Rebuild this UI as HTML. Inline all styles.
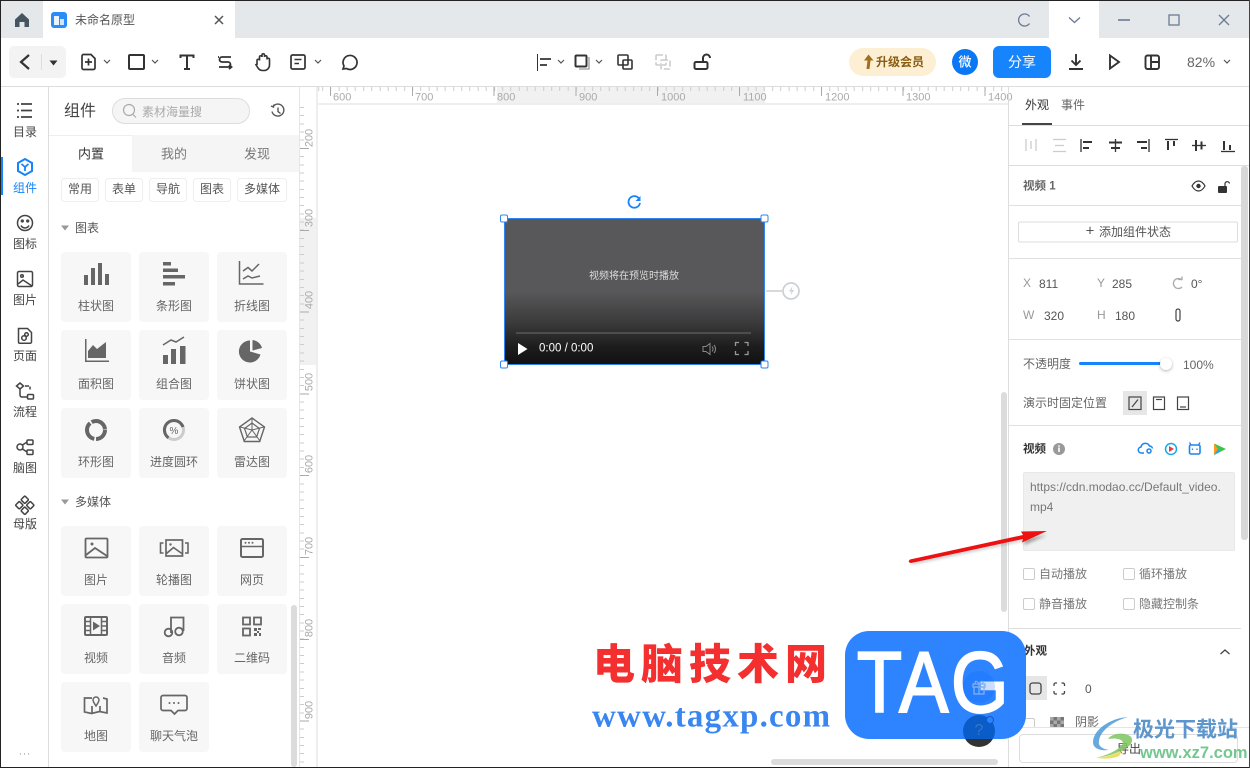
<!DOCTYPE html>
<html lang="zh"><head><meta charset="utf-8"><title>未命名原型</title>
<style>
*{box-sizing:border-box}
html,body{margin:0;padding:0;width:1250px;height:768px;overflow:hidden;background:#fff}
body{position:relative;font-family:"Liberation Sans","Noto Sans CJK SC",sans-serif;font-size:12px;color:#666}
.a{position:absolute}
.t{position:absolute;white-space:nowrap;transform:translateY(-50%);line-height:1}
.c{position:absolute;white-space:nowrap;transform:translate(-50%,-50%);line-height:1}
.card{position:absolute;width:70px;height:70px;background:#f7f7f7;border-radius:4px}
.chip{position:absolute;top:178px;height:24px;border:1px solid #eee;border-radius:4px;background:#fff;text-align:center;line-height:21px;color:#555;font-size:12px}
.ln{position:absolute;background:#e0e0e0;height:1px;left:1009px;width:232px}
.rx{position:absolute;top:98px;font-size:11px;line-height:1;color:#aaa;transform:translateY(-50%)}
.ry{position:absolute;left:310px;font-size:11px;line-height:1;color:#aaa;transform:translate(-50%,-50%) rotate(-90deg)}
.cb{position:absolute;width:12px;height:12px;border:1px solid #ccc;border-radius:2px;background:#fff}
</style></head><body>

<!-- title bar -->
<div class="a" style="left:0;top:0;width:1250px;height:38px;background:#e5e8eb"></div>
<div class="a" style="left:43px;top:1px;width:192px;height:37px;background:#fff"></div>
<div class="a" style="left:1049px;top:1px;width:50px;height:37px;background:#fff"></div>
<div class="t" style="left:75px;top:20px;font-size:12px;color:#555">未命名原型</div>

<!-- toolbar -->
<div class="a" style="left:0;top:86px;width:1250px;height:1px;background:#ddd"></div>
<div class="a" style="left:9px;top:46px;width:57px;height:32px;background:#f3f3f3;border-radius:5px"></div>
<div class="a" style="left:849px;top:48px;width:87px;height:28px;background:#fdefd3;border-radius:14px"></div>
<div class="t" style="left:876px;top:62px;font-size:12px;font-weight:700;color:#8a5d12">升级会员</div>
<div class="a" style="left:952px;top:49px;width:26px;height:26px;background:#0a78f5;border-radius:50%"></div>
<div class="c" style="left:965px;top:62px;font-size:13px;color:#fff;font-weight:500">微</div>
<div class="a" style="left:993px;top:46px;width:58px;height:32px;background:#1684fc;border-radius:6px"></div>
<div class="c" style="left:1022px;top:62px;font-size:14px;color:#fff">分享</div>
<div class="t" style="left:1187px;top:62px;font-size:14px;color:#666">82%</div>

<!-- left rail -->
<div class="a" style="left:48px;top:87px;width:1px;height:681px;background:#ddd"></div>
<div class="a" style="left:1px;top:157px;width:2px;height:38px;background:#1684fc"></div>
<div class="c" style="left:25px;top:132px;color:#444">目录</div>
<div class="c" style="left:25px;top:188px;color:#1684fc">组件</div>
<div class="c" style="left:25px;top:244px;color:#444">图标</div>
<div class="c" style="left:25px;top:300px;color:#444">图片</div>
<div class="c" style="left:25px;top:356px;color:#444">页面</div>
<div class="c" style="left:25px;top:412px;color:#444">流程</div>
<div class="c" style="left:25px;top:468px;color:#444">脑图</div>
<div class="c" style="left:25px;top:524px;color:#444">母版</div>
<div class="c" style="left:25px;top:752px;color:#999;font-size:11px;letter-spacing:1px">...</div>

<!-- sidebar -->
<div class="a" style="left:299px;top:87px;width:1px;height:681px;background:#e6e6e6"></div>
<div class="t" style="left:64px;top:112px;font-size:16px;color:#444">组件</div>
<div class="a" style="left:112px;top:98px;width:138px;height:26px;background:#f5f5f5;border:1px solid #ddd;border-radius:13px"></div>
<div class="t" style="left:142px;top:112px;font-size:12px;color:#aaa">素材海量搜</div>
<div class="a" style="left:49px;top:135px;width:250px;height:1px;background:#eee"></div>
<div class="a" style="left:132px;top:135px;width:167px;height:37px;background:#f5f5f5"></div>
<div class="c" style="left:91px;top:154px;font-size:13px;color:#333">内置</div>
<div class="c" style="left:174px;top:154px;font-size:13px;color:#777">我的</div>
<div class="c" style="left:257px;top:154px;font-size:13px;color:#777">发现</div>
<div class="chip" style="left:61px;width:38px">常用</div>
<div class="chip" style="left:105px;width:38px">表单</div>
<div class="chip" style="left:149px;width:38px">导航</div>
<div class="chip" style="left:193px;width:38px">图表</div>
<div class="chip" style="left:237px;width:50px">多媒体</div>
<div class="t" style="left:75px;top:228px;color:#555">图表</div>
<div class="t" style="left:75px;top:502px;color:#555">多媒体</div>

<div class="card" style="left:61px;top:252px"></div><div class="card" style="left:139px;top:252px"></div><div class="card" style="left:217px;top:252px"></div>
<div class="card" style="left:61px;top:330px"></div><div class="card" style="left:139px;top:330px"></div><div class="card" style="left:217px;top:330px"></div>
<div class="card" style="left:61px;top:408px"></div><div class="card" style="left:139px;top:408px"></div><div class="card" style="left:217px;top:408px"></div>
<div class="card" style="left:61px;top:526px"></div><div class="card" style="left:139px;top:526px"></div><div class="card" style="left:217px;top:526px"></div>
<div class="card" style="left:61px;top:604px"></div><div class="card" style="left:139px;top:604px"></div><div class="card" style="left:217px;top:604px"></div>
<div class="card" style="left:61px;top:682px"></div><div class="card" style="left:139px;top:682px"></div>

<div class="c" style="left:96px;top:306px">柱状图</div><div class="c" style="left:174px;top:306px">条形图</div><div class="c" style="left:252px;top:306px">折线图</div>
<div class="c" style="left:96px;top:384px">面积图</div><div class="c" style="left:174px;top:384px">组合图</div><div class="c" style="left:252px;top:384px">饼状图</div>
<div class="c" style="left:96px;top:462px">环形图</div><div class="c" style="left:174px;top:462px">进度圆环</div><div class="c" style="left:252px;top:462px">雷达图</div>
<div class="c" style="left:96px;top:580px">图片</div><div class="c" style="left:174px;top:580px">轮播图</div><div class="c" style="left:252px;top:580px">网页</div>
<div class="c" style="left:96px;top:658px">视频</div><div class="c" style="left:174px;top:658px">音频</div><div class="c" style="left:252px;top:658px">二维码</div>
<div class="c" style="left:96px;top:736px">地图</div><div class="c" style="left:174px;top:736px">聊天气泡</div>
<div class="a" style="left:291px;top:605px;width:6px;height:162px;background:#dcdcdc;border-radius:3px"></div>

<!-- rulers -->
<div class="a" style="left:497px;top:87px;width:268px;height:16px;background:#f1f1f1"></div>
<div class="a" style="left:300px;top:218px;width:16px;height:147px;background:#f1f1f1"></div>
<div class="a" style="left:317px;top:87px;width:691px;height:4px;background:repeating-linear-gradient(90deg,#ccc 0,#ccc 1px,transparent 1px,transparent 8.18px);background-position:5.2px 0"></div>
<div class="a" style="left:330px;top:87px;width:678px;height:9px;background:repeating-linear-gradient(90deg,#aaa 0,#aaa 1px,transparent 1px,transparent 81.8px)"></div>
<div class="a" style="left:316px;top:103px;width:692px;height:2px;background:#eee"></div>
<div class="a" style="left:316px;top:87px;width:2px;height:681px;background:#eee"></div>
<div class="a" style="left:300px;top:107px;width:4px;height:661px;background:repeating-linear-gradient(180deg,#ccc 0,#ccc 1px,transparent 1px,transparent 8.18px)"></div>
<div class="a" style="left:300px;top:148px;width:9px;height:620px;background:repeating-linear-gradient(180deg,#aaa 0,#aaa 1px,transparent 1px,transparent 81.8px)"></div>
<span class="rx" style="left:333px">600</span><span class="rx" style="left:415px">700</span><span class="rx" style="left:497px">800</span><span class="rx" style="left:579px">900</span><span class="rx" style="left:661px">1000</span><span class="rx" style="left:743px">1100</span><span class="rx" style="left:825px">1200</span><span class="rx" style="left:906px">1300</span><span class="rx" style="left:988px">1400</span>
<span class="ry" style="top:138px">200</span><span class="ry" style="top:218px">300</span><span class="ry" style="top:300px">400</span><span class="ry" style="top:382px">500</span><span class="ry" style="top:464px">600</span><span class="ry" style="top:546px">700</span><span class="ry" style="top:628px">800</span><span class="ry" style="top:710px">900</span>

<!-- video -->
<div class="a" style="left:504px;top:218px;width:261px;height:147px;border:1.500px solid #2f86f0;background:linear-gradient(180deg,#58585a 0,#58585a 50%,#3a3a3b 72%,#1d1d1d 88%,#111 100%)"></div>
<div class="c" style="left:634px;top:277px;font-size:10px;color:#ddd">视频将在预览时播放</div>
<div class="a" style="left:516px;top:332px;width:235px;height:2px;background:#4d4d4d"></div>
<div class="t" style="left:539px;top:349px;font-size:11.500px;color:#fff">0:00 / 0:00</div>
<div class="a" style="left:1001px;top:392px;width:6px;height:220px;background:#dcdcdc;border-radius:3px"></div>
<div class="a" style="left:771px;top:759px;width:227px;height:6px;background:#dcdcdc;border-radius:3px"></div>

<!-- right panel -->
<div class="a" style="left:1008px;top:87px;width:1px;height:681px;background:#ddd"></div>
<div class="c" style="left:1037px;top:105px;color:#333;font-size:12px">外观</div>
<div class="c" style="left:1073px;top:105px;color:#666;font-size:12px">事件</div>
<div class="a" style="left:1009px;top:125px;width:241px;height:1px;background:#ddd"></div>
<div class="a" style="left:1022px;top:123px;width:30px;height:2px;background:#444"></div>
<div class="a" style="left:1009px;top:165px;width:241px;height:1px;background:#ddd"></div>
<div class="a" style="left:1241px;top:166px;width:7px;height:374px;background:#d8d8d8;border-radius:3px"></div>
<div class="t" style="left:1023px;top:187px;color:#666;font-weight:700;font-size:11.500px">视频 1</div>
<div class="ln" style="top:205px"></div>
<div class="c" style="left:1128px;top:232px;width:220px;height:21px;border:1px solid #ddd;border-radius:2px;background:#fff"></div>
<div class="c" style="left:1090px;top:231px;color:#555;font-size:15px">+</div>
<div class="t" style="left:1099px;top:232px;color:#555">添加组件状态</div>
<div class="ln" style="top:258px"></div>
<div class="t" style="left:1023px;top:283px;color:#999">X</div><div class="t" style="left:1039px;top:284px;color:#555">811</div>
<div class="t" style="left:1097px;top:283px;color:#999">Y</div><div class="t" style="left:1112px;top:284px;color:#555">285</div>
<div class="t" style="left:1191px;top:284px;color:#555">0°</div>
<div class="t" style="left:1023px;top:315px;color:#999">W</div><div class="t" style="left:1044px;top:316px;color:#555">320</div>
<div class="t" style="left:1097px;top:315px;color:#999">H</div><div class="t" style="left:1115px;top:316px;color:#555">180</div>
<div class="ln" style="top:339px"></div>
<div class="t" style="left:1023px;top:364px;color:#666">不透明度</div>
<div class="a" style="left:1079px;top:362px;width:83px;height:3px;background:#1684fc;border-radius:2px"></div>
<div class="a" style="left:1160px;top:358px;width:12px;height:12px;border-radius:50%;background:#fff;box-shadow:0 1px 3px rgba(0,0,0,.3)"></div>
<div class="t" style="left:1183px;top:365px;color:#666">100%</div>
<div class="t" style="left:1023px;top:403px;color:#666">演示时固定位置</div>
<div class="a" style="left:1123px;top:391px;width:24px;height:24px;background:#e6e6e6"></div>
<div class="ln" style="top:425px"></div>
<div class="t" style="left:1023px;top:450px;color:#333;font-weight:700;font-size:11.500px">视频</div>
<div class="a" style="left:1023px;top:472px;width:212px;height:79px;background:#f0f0f0;border:1px solid #e8e8e8;border-radius:2px"></div>
<div class="t" style="left:1030px;top:487px;color:#777">https://cdn.modao.cc/Default_video.</div>
<div class="t" style="left:1030px;top:507px;color:#777">mp4</div>
<div class="cb" style="left:1023px;top:568px"></div><div class="t" style="left:1039px;top:574px;color:#777">自动播放</div>
<div class="cb" style="left:1123px;top:568px"></div><div class="t" style="left:1139px;top:574px;color:#777">循环播放</div>
<div class="cb" style="left:1023px;top:598px"></div><div class="t" style="left:1039px;top:604px;color:#777">静音播放</div>
<div class="cb" style="left:1123px;top:598px"></div><div class="t" style="left:1139px;top:604px;color:#777">隐藏控制条</div>
<div class="a" style="left:1009px;top:628px;width:232px;height:1px;background:#ddd"></div>
<div class="t" style="left:1024px;top:652px;color:#333;font-weight:700;font-size:11.500px">外观</div>
<div class="a" style="left:1024px;top:676px;width:23px;height:24px;background:#e6e6e6"></div>
<div class="t" style="left:1085px;top:689px;color:#555">0</div>
<div class="a" style="left:1022px;top:718px;width:13px;height:10px;border:1px solid #ccc;border-bottom:0;border-radius:2px 2px 0 0"></div>
<div class="a" style="left:1050px;top:717px;width:14px;height:10px;background:repeating-conic-gradient(#777 0 25%,#aaa 0 50%) 0 0/7px 7px"></div>
<div class="t" style="left:1075px;top:722px;color:#666">阴影</div>
<div class="a" style="left:1009px;top:727px;width:241px;height:1px;background:#e4e4e4"></div>
<div class="a" style="left:1019px;top:734px;width:219px;height:29px;border:1px solid #ddd;border-radius:4px;background:#fff"></div>

<!-- icons layer -->
<svg class="a" style="left:0;top:0" width="1250" height="768" viewBox="0 0 1250 768">
<!-- title bar -->
<path d="M15 27V19.500L22 13l7 6.500V27h-4.500v-5h-5v5z" fill="#46555f"/>
<rect x="51" y="12" width="16" height="16" rx="3" fill="#2a8cf7"/><rect x="54" y="16" width="5" height="9" fill="#fff" opacity=".9"/><rect x="60" y="19" width="4" height="6" fill="#cfe4ff"/>
<g fill="none" stroke="#555" stroke-width="1.500"><path d="M215 16l8 8M223 16l-8 8"/></g>
<g fill="none" stroke="#6b7a95" stroke-width="1.300">
<path d="M1029.500 16.500a6 6 0 1 0 0 7"/><path d="M1069 17.500l5.500 5 5.500-5"/><path d="M1118 20h12" stroke-width="1.600"/><rect x="1169" y="15" width="10" height="10"/><path d="M1219 15l10 10M1229 15l-10 10"/></g>
<!-- toolbar left -->
<g fill="none" stroke="#333" stroke-width="2">
<path d="M29 55l-8 7 8 7" stroke-width="2.200"/>
<path d="M82 56a1.500 1.500 0 0 1 1.500-1.500H91l4 4V68a1.500 1.500 0 0 1-1.500 1.500h-10A1.500 1.500 0 0 1 82 68zM85 62h7M88.500 58.500v7" stroke-width="1.700"/>
<rect x="129" y="55" width="15" height="14" rx="1"/>
<path d="M180.500 58v-2.500h13V58M187 55.500V69M184 69h6" stroke-width="2"/>
<path d="M231 57h-9a2.500 2.500 0 0 0 0 5h6a2.500 2.500 0 0 1 0 5h-9M218 57h1M229 65l2.500 2-2.500 2" stroke-width="1.800"/>
<path d="M257 65v-4.500a1.200 1.200 0 0 1 2.500 0V57a1.200 1.200 0 0 1 2.500 0v-2a1.200 1.200 0 0 1 2.500 0v2a1.200 1.200 0 0 1 2.500 0v2.500a1.200 1.200 0 0 1 2.500 0V65a5.500 5.500 0 0 1-5.500 5.500h-1.500c-2 0-3.500-1-4.500-2.500l-2.500-4" stroke-width="1.600"/>
<rect x="291" y="55" width="14" height="14" rx="1.500" stroke-width="1.700"/><path d="M294.500 59.500h7M294.500 63.500h4.500" stroke-width="1.500"/>
<path d="M343 69l1-3a7 7 0 1 1 2.500 2.500z" stroke-width="1.700"/>
</g>
<path d="M49.500 60.500h8l-4 5z" fill="#333"/><rect x="41" y="54" width="1" height="16" fill="#ddd"/>
<g fill="none" stroke="#555" stroke-width="1.200"><path d="M104 60l3 3 3-3M152 60l3 3 3-3M315 60l3 3 3-3M558 60l3 3 3-3M596 60l3 3 3-3M1224 60l3 3 3-3"/></g>
<!-- toolbar center -->
<g fill="none" stroke="#333" stroke-width="1.800">
<path d="M537.500 54v17" stroke-width="1"/><path d="M540 59h11M540 65h7"/>
<rect x="575.500" y="55.500" width="11" height="11" rx="1" stroke-width="2"/><path d="M589 57v12h-10" stroke="#999" stroke-width="1.300"/>
<rect x="618" y="55" width="10" height="10" rx="1" stroke-width="1.600"/><rect x="623" y="60" width="9" height="9" rx="1" stroke-width="1.600"/>
<path d="M696 62h10a1.500 1.500 0 0 1 1.500 1.500v4a1.500 1.500 0 0 1-1.500 1.500h-10a1.500 1.500 0 0 1-1.500-1.500v-4a1.500 1.500 0 0 1 1.500-1.500zM703 61v-3a3.500 3.500 0 0 1 7 0" stroke-width="2"/>
</g>
<g fill="none" stroke="#ccc" stroke-width="1.600"><rect x="656" y="55" width="10" height="10" rx="1" stroke-dasharray="6 2"/><rect x="661" y="60" width="9" height="9" rx="1" stroke-dasharray="6 2"/></g>
<!-- upgrade + right -->
<path d="M868.500 54.500l5 6h-3l-1 8.500h-3l1-8.500h-3.500z" fill="#a36f1c"/>
<g fill="none" stroke="#333" stroke-width="1.900">
<path d="M1076 54v11M1071.500 60.500l4.500 4.500 4.500-4.500M1069 69h14"/>
<path d="M1110 55.500l9 6.500-9 6.500z"/>
<rect x="1145.500" y="55.500" width="13.500" height="13.500" rx="2"/><path d="M1151 55.500v13.500M1151 62h8"/>
</g>
<!-- rail icons -->
<g fill="none" stroke="#444" stroke-width="1.500">
<path d="M21 104h11M21 110.500h11M21 117h11M17 104h2M17 110.500h2M17 117h2" stroke-width="1.700"/>
<circle cx="25" cy="223" r="7.500"/><circle cx="22.300" cy="221" r=".9" fill="#444"/><circle cx="27.700" cy="221" r=".9" fill="#444"/><path d="M21 225.500a4.500 4.500 0 0 0 8 0"/>
<rect x="17.500" y="271.500" width="15" height="15" rx="1.500"/><circle cx="22" cy="276" r="1.300"/><path d="M18 284l5-4 3 2 6 4"/>
<path d="M18.500 328.500h9l4 4v9.500a1.200 1.200 0 0 1-1.200 1.200H19.700a1.200 1.200 0 0 1-1.200-1.200z"/><circle cx="24" cy="338" r="2.300"/><circle cx="26.500" cy="334.500" r="1.800"/>
<path d="M20 383l-3.500 3 3.500 3 3.500-3zM25 386h4M30 386.500v3M20 389v6a2 2 0 0 0 2 2h5"/><rect x="27.500" y="394.500" width="6" height="4.500" rx="1"/>
<circle cx="20" cy="447" r="3"/><rect x="27" y="440" width="6" height="4.500" rx="1"/><rect x="27" y="450" width="6" height="4.500" rx="1"/><path d="M22.500 445l4.500-3M22.500 449l4.500 3"/>
<rect x="22" y="497" width="5.500" height="5.500" rx="1" transform="rotate(45 24.800 499.800)"/><rect x="22" y="508" width="5.500" height="5.500" rx="1" transform="rotate(45 24.800 510.800)"/><rect x="16.500" y="502.500" width="5.500" height="5.500" rx="1" transform="rotate(45 19.300 505.300)"/><rect x="27.500" y="502.500" width="5.500" height="5.500" rx="1" transform="rotate(45 30.300 505.300)"/>
</g>
<path d="M25 159l7 4v8l-7 4-7-4v-8z" fill="none" stroke="#1684fc" stroke-width="2"/><path d="M21.500 164l3.500 3 3.500-3M25 167v4" fill="none" stroke="#1684fc" stroke-width="1.800"/>
<!-- search + clock -->
<g fill="none" stroke="#aaa" stroke-width="1.200"><circle cx="129" cy="110" r="5.500"/><path d="M133 114.500l3 3"/></g>
<g fill="none" stroke="#555" stroke-width="1.400"><path d="M273 106.500a6 6 0 1 1-1 5"/><path d="M278 107.500v4l2.500 2"/><path d="M271 106l2.500 1 .5-2.500"/></g>
<path d="M61 225.500h8l-4 5zM61 499.500h8l-4 5z" fill="#999"/>
<!-- chart icons -->
<g fill="#666">
<rect x="84" y="275" width="4" height="10"/><rect x="91" y="268" width="4" height="17"/><rect x="98" y="263" width="4" height="22"/><rect x="105" y="274" width="4" height="11"/>
<rect x="163" y="262" width="8" height="3.500"/><rect x="163" y="268.500" width="15" height="3.500"/><rect x="163" y="275" width="22" height="3.500"/><rect x="163" y="282" width="12" height="3.500"/>
<path d="M85 339h1.500v21.500H109v1.500H85z"/><path d="M88 358v-7l5-6 4 4 9-7v16z"/>
<rect x="163" y="355" width="5" height="9"/><rect x="171" y="349" width="5" height="15"/><rect x="180" y="346" width="5.500" height="18"/>
<path d="M250 340.500v11l10.500 3a11 11 0 1 1-10.500-14zM252.500 340a11 11 0 0 1 9.500 8l-9.500 2.500z"/>
</g>
<g fill="none" stroke="#666" stroke-width="1.500">
<path d="M239.500 261v23h24M243 271l5-3.500 4 3.500 7-7M243 279l5-3 4 2 8-2"/>
<path d="M163 345l8-5 5 2 8-5"/>
<circle cx="96" cy="430" r="9" stroke-width="4" stroke-dasharray="14 1.800 20 1.800 18 1.800"/>
<circle cx="174" cy="430" r="9.500" stroke="#ccc" stroke-width="3"/><path d="M174 420.500a9.500 9.500 0 0 0-5.500 17.300" stroke-width="3"/><path d="M174 420.500a9.500 9.500 0 0 1 9 6.500" stroke-width="3"/>
<path d="M252 418l12.500 9-4.800 14.500h-15.400l-4.800-14.500z" stroke-width="1.400"/><path d="M252 423l7.500 5.500-2.900 8.500h-9.200l-2.900-8.500z" stroke-width="1.200"/><path d="M252 418v12M264 427l-12 3M260 441l-8-11M244 441l8-11M240 427l12 3" stroke-width="1"/>
<rect x="85.500" y="538.500" width="22" height="19" rx="1" stroke-width="1.800"/><circle cx="92" cy="544" r="1.500" fill="#666" stroke="none"/><path d="M86 555l9-7 12 8" stroke-width="1.800"/>
<rect x="166" y="540" width="16.500" height="16" stroke-width="1.700"/><circle cx="170.500" cy="544.500" r="1.200" fill="#666" stroke="none"/><path d="M166.500 553.500l7-6 9 6.500M163.500 543h-3v10h3M185 543h3v10h-3" stroke-width="1.600"/>
<rect x="241" y="539" width="22" height="18" rx="1.500" stroke-width="2"/><path d="M241 546.500h22" stroke-width="1.600"/>
<rect x="85" y="617" width="22" height="18" rx="1" stroke-width="2"/><path d="M90.500 617v18M101.500 617v18M85 621.500h5.500M85 626h5.500M85 630.500h5.500M101.500 621.500h5.500M101.500 626h5.500M101.500 630.500h5.500" stroke-width="1.500"/>
<path d="M171 633v-15.500h12.500V631" stroke-width="1.800"/><circle cx="168.500" cy="632.500" r="3.800" stroke-width="1.800"/><circle cx="179" cy="631.500" r="3.800" stroke-width="1.800"/>
<rect x="243" y="617.500" width="7" height="7" stroke-width="1.800"/><rect x="254" y="617.500" width="7" height="7" stroke-width="1.800"/><rect x="243" y="628.500" width="7" height="7" stroke-width="1.800"/>
<path d="M92 698h-7.500v14l7 1.500 8-2 7.500 1.500v-14l-4-1M92 706v7M100 706v6" stroke-width="1.700"/><path d="M96 706c-2-3-3-4.500-3-6a3 3 0 0 1 6 0c0 1.500-1 3-3 6z" stroke-width="1.500"/>
<path d="M163 695.500h22a2 2 0 0 1 2 2v11a2 2 0 0 1-2 2h-7l-3.500 3.500-3.500-3.500h-8a2 2 0 0 1-2-2v-11a2 2 0 0 1 2-2z" stroke-width="1.700"/>
</g>
<path d="M93 621.500l7 4.500-7 4.500z" fill="#666"/>
<path d="M254 628h3v3h-3zM258 628h3v2h-3zM257 631h2v2h-2zM254 633h3v3h-3zM259 633h2v3h-2z" fill="#666"/>
<g fill="#666"><circle cx="245.500" cy="542.700" r="1"/><circle cx="249" cy="542.700" r="1"/><circle cx="252.500" cy="542.700" r="1"/><circle cx="169.500" cy="703" r="1"/><circle cx="174" cy="703" r="1"/><circle cx="178.500" cy="703" r="1"/></g>
<text x="174" y="434" font-size="10" fill="#666" text-anchor="middle" font-family="Liberation Sans">%</text>
<!-- video overlays -->
<g fill="none" stroke="#1684fc" stroke-width="1.800"><path d="M639 198.500a5.800 5.800 0 1 0 1 4.500"/></g><path d="M640.500 196v5h-5z" fill="#1684fc"/>
<g fill="#fff" stroke="#2f86f0" stroke-width="1"><rect x="500.500" y="215" width="7" height="7" rx="1.500"/><rect x="761" y="215" width="7" height="7" rx="1.500"/><rect x="500.500" y="361" width="7" height="7" rx="1.500"/><rect x="761" y="361" width="7" height="7" rx="1.500"/></g>
<path d="M518 343l9.500 6-9.500 6z" fill="#fff"/>
<g fill="none" stroke="#888" stroke-width="1"><path d="M703 346.500h3l4-3v11l-4-3h-3zM712 346.500a3.500 3.500 0 0 1 0 5M714 345a6 6 0 0 1 0 8"/></g>
<g fill="none" stroke="#999" stroke-width="1.300"><path d="M735.500 346v-3.500h3.500M744.500 342.500h3.500v3.500M748 351v3.500h-3.500M739 354.500h-3.500V351"/></g>
<path d="M766 291h16" stroke="#ccc" stroke-width="1.500"/><circle cx="791" cy="291" r="8" fill="#fff" stroke="#ccd0d4" stroke-width="1.700"/><path d="M792.500 286l-3.500 5.500h2.500l-1 4 3.500-5.500h-2.500z" fill="#ccd0d4"/>
<!-- right panel align -->
<g fill="none" stroke="#ccc" stroke-width="1.300"><path d="M1026 139v12M1036 139v12M1031 141v8"/><path d="M1053 139.500h13M1053 151.500h13M1055 145.500h9"/></g>
<g fill="none" stroke="#333" stroke-width="1.300">
<path d="M1081 139v13"/><path d="M1083 142h9M1083 148h6" stroke-width="2"/>
<path d="M1115.500 139v13"/><path d="M1109 142.500h13M1111 148h9" stroke-width="2"/>
<path d="M1149 139v13"/><path d="M1137 142h10M1141 148h6" stroke-width="2"/>
<path d="M1165 139.500h13"/><path d="M1168 141v9M1174 141v5" stroke-width="2"/>
<path d="M1192 145.500h14"/><path d="M1196 140v11M1201.500 141.500v8" stroke-width="2"/>
<path d="M1221 151.500h14"/><path d="M1224 141v9M1230 145v5" stroke-width="2"/>
<path d="M1192 186c2-3.500 4-5 6.500-5s4.500 1.500 6.500 5c-2 3.500-4 5-6.500 5s-4.500-1.500-6.500-5z" stroke-width="1.200"/></g>
<circle cx="1198.500" cy="186" r="2.200" fill="#333"/>
<rect x="1218" y="186" width="9" height="7" rx="1" fill="#333"/><path d="M1225 186v-2.500a2.300 2.300 0 0 1 4.500 0" fill="none" stroke="#333" stroke-width="1.200"/>
<g fill="none" stroke="#aaa" stroke-width="1.300"><path d="M1182 280a5 5 0 1 0 0 7"/><path d="M1178 279.500h4v-3"/></g>
<g fill="none" stroke="#444" stroke-width="1.200"><path d="M1176 312v-1a2 2 0 0 1 4 0v1M1176 318v1a2 2 0 0 0 4 0v-1M1176 312v6M1180 312v6"/>
<rect x="1129" y="397" width="12" height="12.500"/><path d="M1132 407l6-7.500"/>
<rect x="1153.500" y="397" width="11" height="12.500"/><path d="M1156 399.500h6"/>
<rect x="1177.500" y="397" width="11" height="12.500"/><path d="M1180 407h6"/>
<path d="M1220.500 650l4.500 4 4.500-4" transform="rotate(180 1225 652)" stroke-width="1.300"/>
<rect x="1030" y="683" width="11" height="11" rx="2.500" stroke-width="1.300"/>
<path d="M1054 686v-1.500a1.500 1.500 0 0 1 1.500-1.500h1.500M1061.500 683h1.500a1.500 1.500 0 0 1 1.500 1.500v1.500M1064.500 691v1.500a1.500 1.500 0 0 1-1.500 1.500h-1.500M1057 694h-1.500a1.500 1.500 0 0 1-1.500-1.500V691" stroke-width="1.300"/></g>
<circle cx="1059" cy="449" r="6" fill="#999"/><rect x="1058.200" y="447.500" width="1.600" height="4.500" fill="#fff"/><rect x="1058.200" y="445.300" width="1.600" height="1.500" fill="#fff"/>
<!-- video source logos -->
<g fill="none" stroke="#1a86ee" stroke-width="1.500"><path d="M1144 453h-2.500a3 3 0 0 1-.5-6 4.500 4.500 0 0 1 8.500-1 3 3 0 0 1 3 2.500"/><circle cx="1149" cy="451" r="2"/></g>
<circle cx="1171" cy="449" r="5.500" fill="#fff" stroke="#19a7e8" stroke-width="1.500"/><path d="M1169 446l5 3-5 3z" fill="#f03a4a"/>
<rect x="1189.500" y="445" width="10.500" height="9" rx="1.500" fill="none" stroke="#1a86ee" stroke-width="1.600"/><path d="M1191 445l-1.500-2.500M1198.500 445l1.500-2.500" stroke="#1a86ee" stroke-width="1.300"/><path d="M1192.500 448.500v1.500M1197 448.500v1.500" stroke="#1a86ee" stroke-width="1.300"/>
<path d="M1214 443.500l12 5.500-12 6z" fill="#3ec24a"/><path d="M1214 443.500l4 5.500-4 6z" fill="#ff9a1f"/><path d="M1218 449l-4 6 6-3z" fill="#28a5ee"/>
</svg>

<!-- red arrow -->
<svg class="a" style="left:900px;top:520px" width="160" height="55" viewBox="900 520 160 55">
<defs><filter id="b" x="-10%" y="-50%" width="120%" height="200%"><feGaussianBlur stdDeviation="1.500"/></filter></defs>
<path d="M912 564L1025 540 1024 545 1047 535 1027 538 912 562z" fill="#555" opacity=".55" filter="url(#b)"/>
<path d="M910 559.500L1023 535 1021 531.500 1047 531 1022 542.500 1023 539 911 563Q907 562 910 559.500z" fill="#ee1111"/>
</svg>

<!-- watermark -->
<div class="t" style="left:593px;top:662px;font-family:'Noto Sans CJK SC',sans-serif;font-weight:900;font-size:42px;letter-spacing:6px;color:#f42f2f">电脑技术网</div>
<div class="t" style="left:592px;top:717px;font-family:'Liberation Serif',serif;font-weight:700;font-size:33px;letter-spacing:1.200px;color:#3a86f0">www.tagxp.com</div>
<div class="a" style="left:845px;top:631px;width:181px;height:108px;background:rgba(35,125,255,.95);border-radius:24px"></div>
<div class="c" style="left:934px;top:683px;font-family:'Liberation Sans',sans-serif;font-size:86px;letter-spacing:3px;color:#fff;-webkit-text-stroke:2px #fff;transform:translate(-50%,-50%) scaleX(.86)">TAG</div>
<div class="a" style="left:963px;top:671px;width:32px;height:32px;background:rgba(0,95,255,.2);border-radius:50%"></div>
<svg class="a" style="left:971px;top:679px" width="16" height="16" viewBox="0 0 16 16"><g fill="none" stroke="#7fb0ef" stroke-width="1.300"><rect x="2" y="5" width="12" height="3"/><rect x="3" y="8" width="10" height="7"/><path d="M8 5v10M8 5C6 1 3 2 4.500 5M8 5c2-4 5-3 3.500 0"/></g></svg>
<div class="a" style="left:963px;top:715px;width:32px;height:32px;border-radius:50%;background:linear-gradient(180deg,#0a5cc8 0,#0a5cc8 75%,#333 75%,#333 100%)"></div>
<div class="c" style="left:979px;top:731px;font-size:16px;color:#3c74c4">?</div>
<div class="a" style="left:986px;top:716px;width:8px;height:8px;background:#2f80ff;border:1px solid #0a5cc8;border-radius:50%"></div>
<div class="c" style="left:1129px;top:749px;color:#444">导出</div>
<svg class="a" style="left:1088px;top:712px;opacity:.85" width="50" height="50" viewBox="0 0 50 50">
<path d="M40 5C22 6 5 18 5 30c0 7 8 9 16 8-7-1-11-4-10-9C12 19 25 9 40 5z" fill="#4d9bd8"/>
<path d="M20 27c4-6 16-7 22-3 4 3 2 9-4 12-6 4-16 8-30 10 12-3 22-8 26-13 2-3 0-5-4-6-4-1-8 0-10 0z" fill="#7cc65f"/>
<path d="M8 46c10-1 20-4 27-8l-4 6c-7 3-15 3-23 2z" fill="#e9d94b"/>
</svg>
<div class="t" style="left:1133px;top:729px;font-family:'Noto Sans CJK SC',sans-serif;font-weight:700;font-size:21px;color:#5d95cd">极光下载站</div>
<div class="t" style="left:1140px;top:753px;font-family:'Liberation Sans',sans-serif;font-weight:700;font-size:16.500px;color:#74c78f">www.xz7.com</div>

<!-- window border -->
<div class="a" style="left:0;top:0;width:1250px;height:1px;background:#222"></div>
<div class="a" style="left:0;top:0;width:1px;height:768px;background:#222"></div>
<div class="a" style="left:0;top:767px;width:1250px;height:1px;background:#222"></div>
<div class="a" style="left:1249px;top:0;width:1px;height:768px;background:#444"></div>
</body></html>
